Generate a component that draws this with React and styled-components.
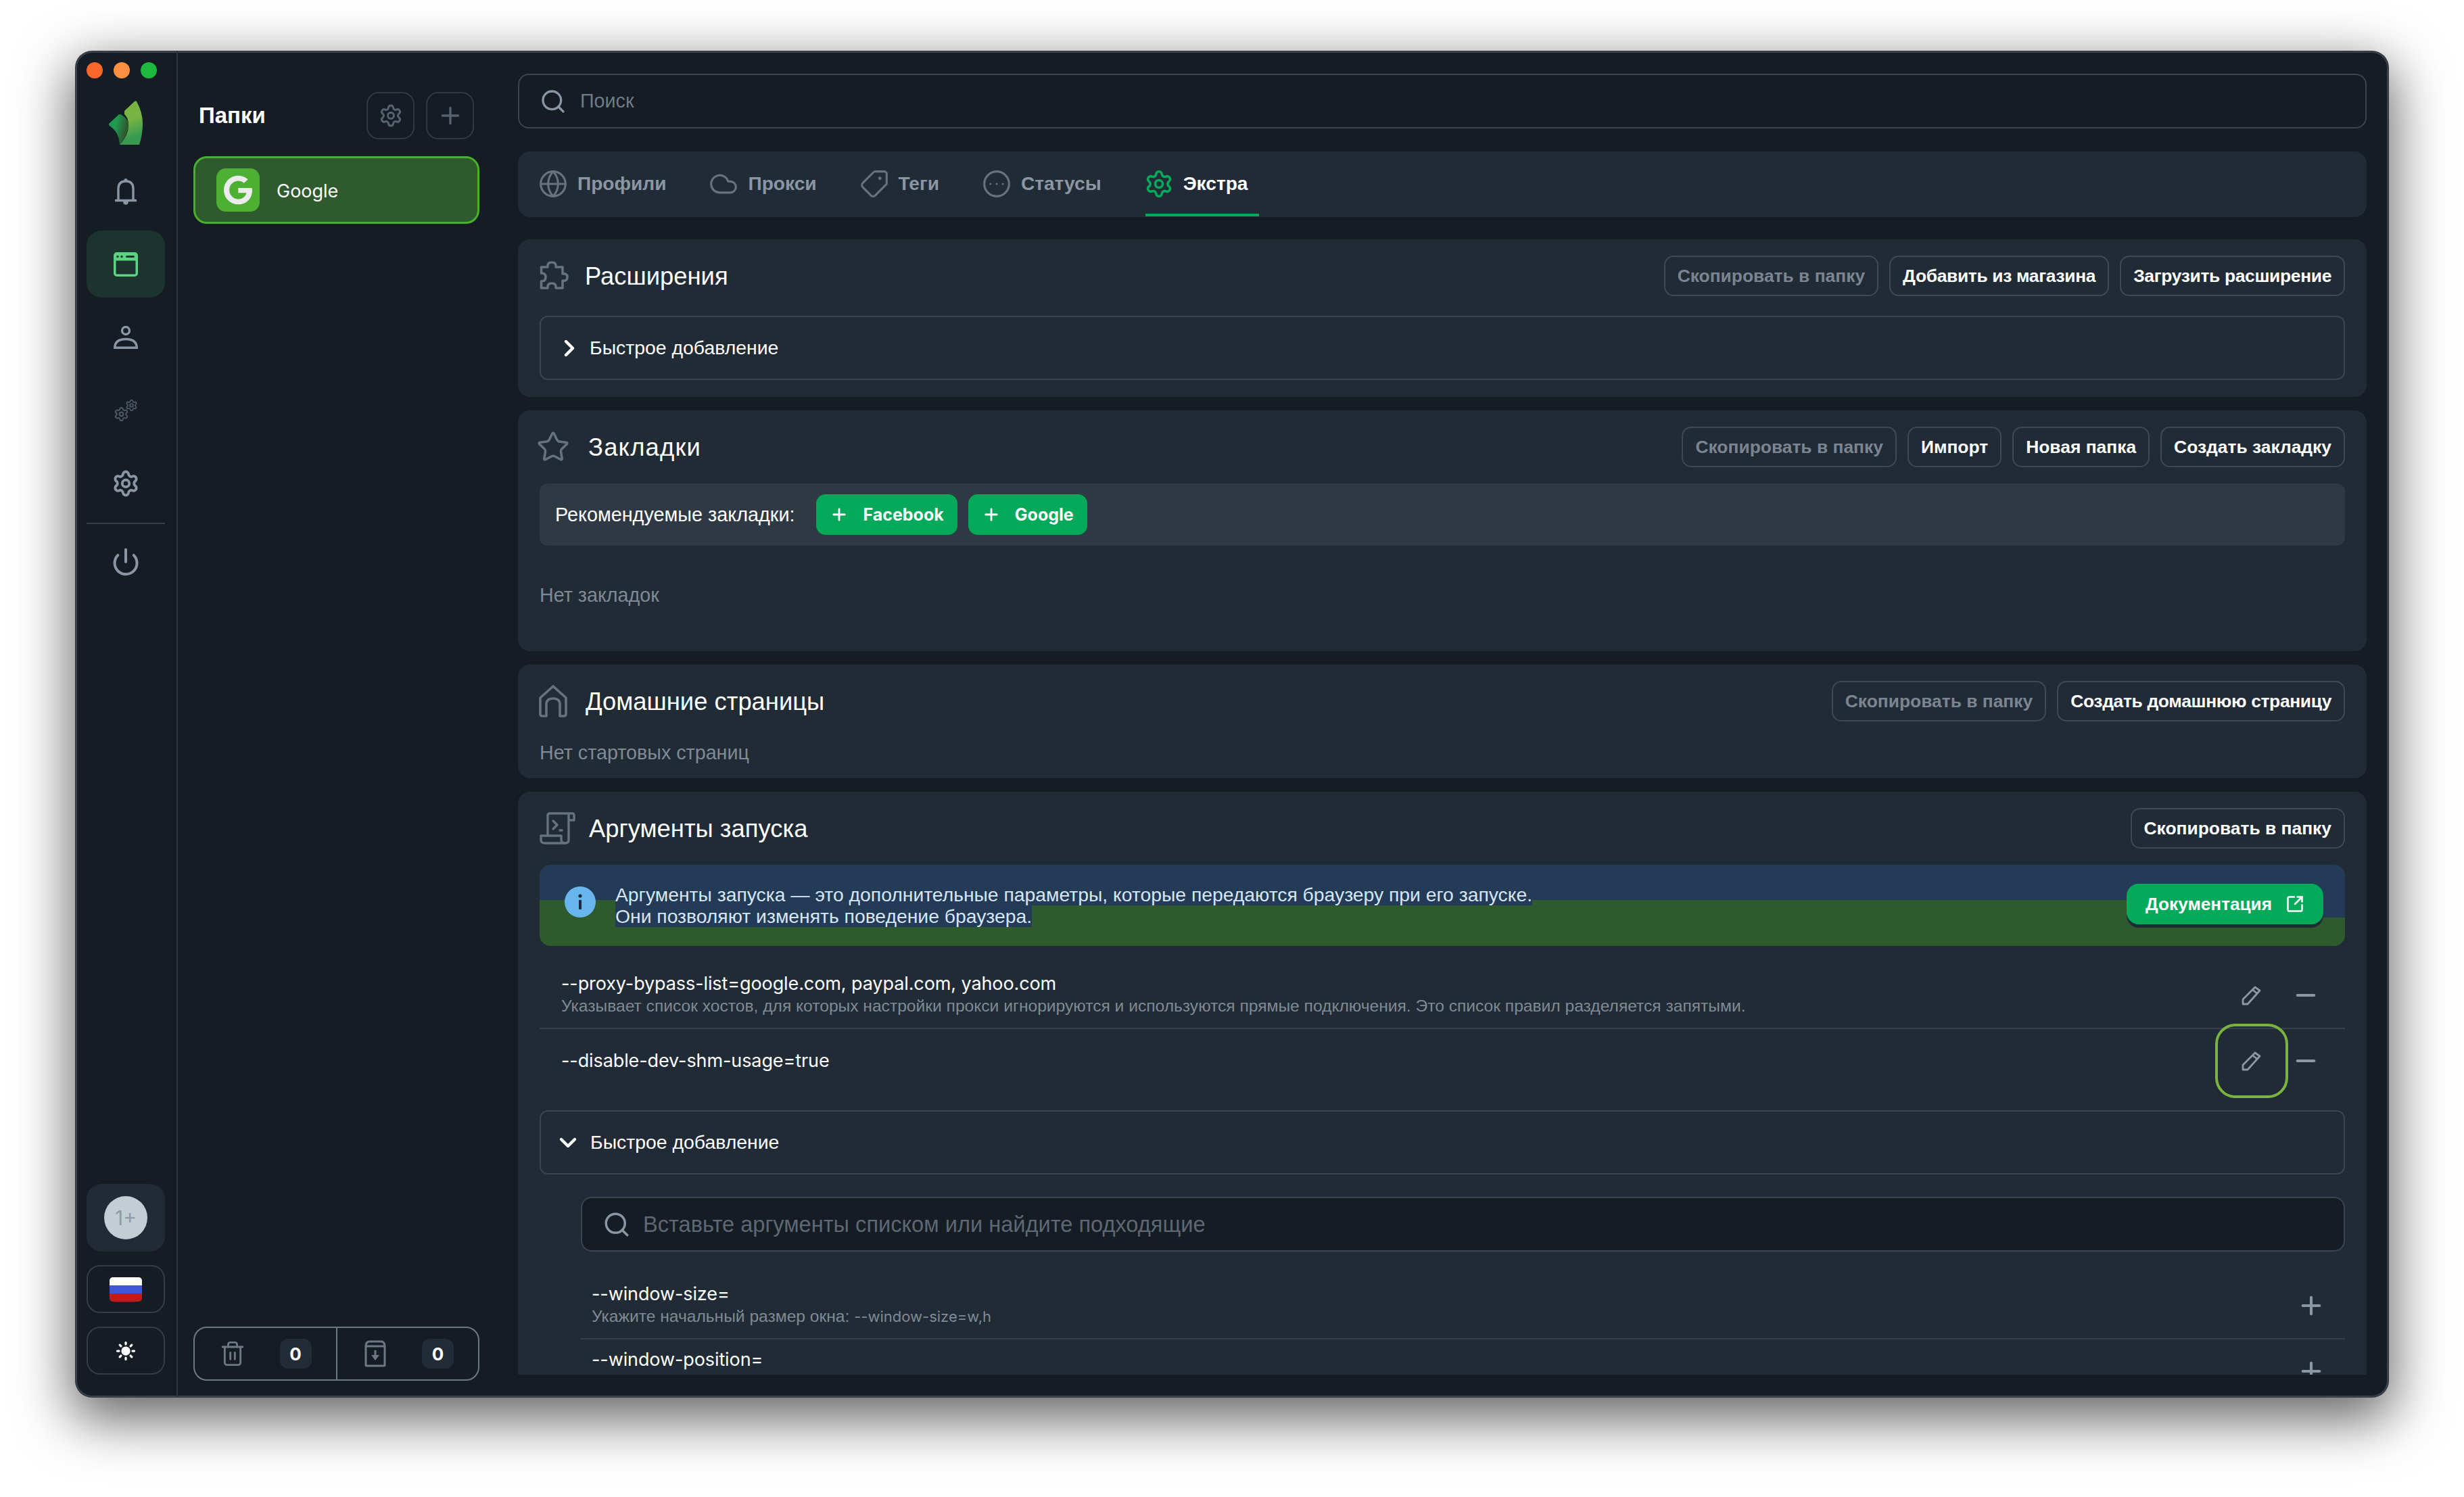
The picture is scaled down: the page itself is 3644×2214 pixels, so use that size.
import React from "react"
import styled, { createGlobalStyle } from "styled-components"
import {
  Settings, Power, Sun, Globe, Cloud, Tag, CircleEllipsis, Star,
  Search, ChevronRight, ChevronDown, Plus, Minus, Trash2, SquareArrowOutUpRight,
} from "lucide-react"
import { FaGoogle } from "react-icons/fa"

const Global = createGlobalStyle`
  html, body { margin: 0; padding: 0; background: #fff; overflow: hidden; }
  * { box-sizing: border-box; }
  body { font-family: "Liberation Sans", Arial, sans-serif; }
`

const Page = styled.div`
  width: 3644px;
  height: 2214px;
  padding: 76px 112px 148px;
`
const Window = styled.div`
  height: 100%;
  display: flex;
  overflow: hidden;
  border-radius: 24px;
  background: #151c24;
  box-shadow: 0 0 0 1px #30363e, inset 0 0 0 2px #3a424c, 0 26px 80px 8px rgba(0, 0, 0, 0.6);
`

/* left rail */
const Rail = styled.aside`
  width: 151px;
  flex-shrink: 0;
  display: flex;
  flex-direction: column;
  padding: 16px 17px 33px 16px;
  border-right: 2px solid #2b343e;
`
const Lights = styled.div`
  display: flex;
  gap: 16px;
`
const Light = styled.span`
  width: 24px;
  height: 24px;
  border-radius: 50%;
  background: ${(p) => p.$color};
`
const LogoWrap = styled.div`
  display: flex;
  justify-content: center;
  margin: 33px 0 19px;
  height: 65px;
`
const RailNav = styled.nav`
  display: flex;
  flex-direction: column;
  gap: 9px;
`
const RailItem = styled.div`
  height: 99px;
  display: flex;
  align-items: center;
  justify-content: center;
  border-radius: 22px;
  color: ${(p) => (p.$dim ? "#4c5763" : "#8a96a3")};
  background: ${(p) => (p.$active ? "#1b342e" : "transparent")};
`
const RailLine = styled.div`
  height: 2px;
  background: #333d48;
  margin-bottom: -3px;
`
const RailBottom = styled.div`
  margin-top: auto;
  display: flex;
  flex-direction: column;
  gap: 20px;
`
const AvatarBox = styled.div`
  height: 100px;
  border-radius: 22px;
  background: #212b36;
  display: flex;
  align-items: center;
  justify-content: center;
`
const Avatar = styled.div`
  width: 64px;
  height: 64px;
  border-radius: 50%;
  background: #c3cdd4;
  color: #8f9ca8;
  font: 400 30px "Inter", sans-serif;
  display: flex;
  align-items: center;
  justify-content: center;
`
const RailBox = styled.div`
  height: 71px;
  border: 2px solid #333d48;
  border-radius: 20px;
  display: flex;
  align-items: center;
  justify-content: center;
  color: #fff;
`
const Flag = styled.div`
  width: 48px;
  height: 36px;
  border-radius: 5px;
  background: linear-gradient(#fff 0 33%, #3f56d8 33% 66%, #c01c1c 66%);
`

/* folders */
const Folders = styled.section`
  width: 503px;
  flex-shrink: 0;
  display: flex;
  flex-direction: column;
  padding: 60px 57px 24px 23px;
`
const FolderHead = styled.div`
  display: flex;
  align-items: center;
  gap: 17px;
  padding: 0 8px;
`
const FolderTitle = styled.h2`
  flex: 1;
  margin: 0;
  color: #fff;
  font-size: 33px;
  font-weight: 700;
`
const SquareBtn = styled.div`
  width: 71px;
  height: 70px;
  border: 2px solid #2f3944;
  border-radius: 18px;
  display: flex;
  align-items: center;
  justify-content: center;
  color: #56626f;
`
const FolderItem = styled.div`
  height: 100px;
  margin-top: 25px;
  padding: 2px 0 0 31px;
  display: flex;
  align-items: center;
  gap: 25px;
  border: 3px solid #46b12c;
  border-radius: 20px;
  background: #2f5a2d;
  color: #fff;
  font: 400 27px "Inter", sans-serif;
`
const FolderIcon = styled.div`
  width: 64px;
  height: 64px;
  margin-top: -2px;
  border-radius: 14px;
  background: #4cb133;
  color: #ececec;
  display: flex;
  align-items: center;
  justify-content: center;
`
const Counters = styled.div`
  margin-top: auto;
  height: 80px;
  display: flex;
  border: 2px solid #6d7885;
  border-radius: 20px;
`
const Counter = styled.div`
  flex: 1;
  display: flex;
  align-items: center;
  justify-content: space-between;
  padding: 0 36px;
  color: #6d7885;
  & + & { border-left: 2px solid #6d7885; }
`
const CountBadge = styled.span`
  width: 47px;
  height: 44px;
  border-radius: 12px;
  background: #222c36;
  color: #fff;
  font: 700 26px "Inter", sans-serif;
  display: flex;
  align-items: center;
  justify-content: center;
`

/* main column */
const Main = styled.main`
  flex: 1;
  min-width: 0;
  display: flex;
  flex-direction: column;
  padding: 33px 32px 33px 0;
`
const SearchBar = styled.div`
  height: 81px;
  flex-shrink: 0;
  display: flex;
  align-items: center;
  gap: ${(p) => (p.$inner ? "18px" : "20px")};
  margin-left: ${(p) => (p.$inner ? "61px" : "0")};
  padding-left: 30px;
  border: 2px solid #3a4551;
  border-radius: 16px;
  background: #151c24;
  font-size: ${(p) => (p.$inner ? "32.6px" : "28.7px")};
  color: ${(p) => (p.$inner ? "#5d6874" : "#6f7b87")};
  svg { color: #8a96a3; flex-shrink: 0; }
`
const Tabs = styled.div`
  height: 97px;
  flex-shrink: 0;
  margin-top: 34px;
  padding-left: 32px;
  display: flex;
  gap: 48px;
  border-radius: 18px;
  background: #212b36;
`
const Tab = styled.div`
  height: 96px;
  padding: 3px 17px 0 0;
  display: flex;
  align-items: center;
  gap: 14px;
  font-size: 28.1px;
  font-weight: 700;
  color: ${(p) => (p.$active ? "#fff" : "#8a96a3")};
  border-bottom: 4px solid ${(p) => (p.$active ? "#04a95a" : "transparent")};
  svg { margin-left: -2px; color: ${(p) => (p.$active ? "#04a95a" : "#66727f")}; }
`
const Scroller = styled.div`
  flex: 1;
  min-height: 0;
  margin-top: 33px;
  overflow: hidden;
  display: flex;
  flex-direction: column;
  gap: 20px;
`
const Panel = styled.section`
  flex-shrink: 0;
  padding: 24px 32px ${(p) => p.$bottom || "0"};
  border-radius: 18px;
  background: #212b36;
`
const PanelHead = styled.header`
  display: flex;
  align-items: center;
  height: 60px;
  margin-bottom: ${(p) => p.$after || "25px"};
  color: #66727f;
`
const PanelTitle = styled.h3`
  flex: 1;
  margin: 0 0 0 ${(p) => p.$gap};
  padding-top: 2px;
  color: #fff;
  font-size: 36.4px;
  line-height: 58px;
  font-weight: 400;
  letter-spacing: ${(p) => p.$track || "0"};
`
const TitleIcon = styled.span`
  display: flex;
  margin-left: -5px;
`
const BtnRow = styled.div`
  display: flex;
  gap: 16px;
`
const GhostBtn = styled.button`
  height: 60px;
  padding: 0 18px;
  border: 2px solid #3d4955;
  border-radius: 14px;
  background: transparent;
  font-family: "Liberation Sans", sans-serif;
  font-size: 26.4px;
  font-weight: 700;
  letter-spacing: ${(p) => (p.$tight ? "-0.33px" : "0")};
  color: ${(p) => (p.$muted ? "#7a8591" : "#fff")};
`
const Accordion = styled.div`
  height: 95px;
  padding-left: ${(p) => (p.$open ? "20px" : "22px")};
  display: flex;
  align-items: center;
  gap: ${(p) => (p.$open ? "13px" : "10px")};
  border: 2px solid #3a4551;
  border-radius: 12px;
  color: #fff;
  font-size: 28.4px;
`
const RecBar = styled.div`
  height: 92px;
  padding-left: 23px;
  display: flex;
  align-items: center;
  border-radius: 12px;
  background: #2e3944;
  color: #fff;
  font-size: 28.8px;
`
const RecLabel = styled.span`
  margin-right: 32px;
`
const GreenBtn = styled.button`
  height: 60px;
  padding: 0 20px;
  margin-right: 16px;
  display: flex;
  align-items: center;
  gap: 21px;
  border: 0;
  border-radius: 14px;
  background: #04a95a;
  color: #fff;
  font: 700 25px "Inter", sans-serif;
`
const Empty = styled.p`
  margin: ${(p) => p.$top} 0 ${(p) => p.$bottom};
  color: #7f8a95;
  font-size: 28.7px;
  line-height: 32px;
`
const Notice = styled.div`
  height: 120px;
  padding: 0 32px 0 37px;
  display: flex;
  align-items: center;
  border-radius: 16px;
  background:
    linear-gradient(#233b57, #233b57) right top / 32px 78px no-repeat,
    linear-gradient(#233b57 52px, #2f5a2d 52px);
`
const NoticeIcon = styled.span`
  display: flex;
  margin: -10px 29px 0 0;
`
const NoticeText = styled.div`
  flex: 1;
  font-size: 28.3px;
  line-height: 32px;
  color: #d7e6f5;
  span { background: #233b57; }
`
const DocBtn = styled.button`
  height: 60px;
  margin-top: -4px;
  padding: 0 28px;
  display: flex;
  align-items: center;
  gap: 20px;
  border: 0;
  border-radius: 18px;
  background: #04a95a;
  box-shadow: 0 5px 0 #1d2a38;
  color: #fff;
  font-family: "Liberation Sans", sans-serif;
  font-size: 26.2px;
  font-weight: 700;
`
const ArgRow = styled.div`
  display: flex;
  align-items: center;
  padding: ${(p) => p.$pad};
  border-bottom: ${(p) => (p.$line ? "2px solid #36414c" : "0")};
  margin-left: ${(p) => p.$indent || "0"};
`
const ArgText = styled.div`
  flex: 1;
  min-width: 0;
  min-height: ${(p) => (p.$tall ? "66px" : "0")};
`
const ArgName = styled.div`
  color: #fff;
  font: 400 27px/32px "Inter", sans-serif;
  letter-spacing: -0.1px;
`
const ArgHint = styled.div`
  margin-top: 1px;
  color: #7f8a95;
  font-size: 24.6px;
  line-height: 32px;
  code { font: 400 22px "Inter", sans-serif; }
`
const Actions = styled.div`
  height: 0;
  display: flex;
  align-items: center;
  flex-shrink: 0;
  color: #8b97a3;
`
const EditBtn = styled.div`
  width: 108px;
  height: 110px;
  flex-shrink: 0;
  display: flex;
  align-items: center;
  justify-content: center;
  border-radius: 30px;
  border: 4px solid ${(p) => (p.$focus ? "#79b53e" : "transparent")};
`
const IconSlot = styled.div`
  width: 52px;
  display: flex;
  justify-content: center;
`
const SubList = styled.div`
  margin-top: 33px;
`

const Logo = () => (
  <svg width="50" height="65" viewBox="0 0 50 65">
    <defs>
      <linearGradient id="lg1" x1="0.4" y1="0" x2="0.6" y2="1">
        <stop offset="0.42" stopColor="#76b543" />
        <stop offset="0.85" stopColor="#389a52" />
      </linearGradient>
      <linearGradient id="lg2" x1="0" y1="0.2" x2="1" y2="0.6">
        <stop offset="0.35" stopColor="#1f9a4e" />
        <stop offset="0.85" stopColor="#2e5a30" />
      </linearGradient>
    </defs>
    <path d="M23 15 L38 1 Q40 -0.5 41 1 Q50 17 50 34 Q50 50 45 65 L16 65 Q30 50 29 34 Q28 24 23 20Z" fill="url(#lg1)" />
    <path d="M0 34 L14 21 Q16 19 19 21 Q27 26 29 34 Q29 50 16 65 Q15 46 1 37 Q-0.5 35 0 34Z" fill="url(#lg2)" />
  </svg>
)
const BellIcon = () => (
  <svg width="32" height="40" viewBox="0 0 32 40" fill="none" stroke="#8a96a3" strokeWidth="3.4">
    <path d="M5 32 V16 Q5 5 16 5 Q27 5 27 16 V32" />
    <path d="M1 33.5 H31" strokeLinecap="round" />
    <circle cx="16" cy="3.5" r="2.6" fill="#8a96a3" stroke="none" />
    <circle cx="16" cy="36" r="3.8" fill="#8a96a3" stroke="none" />
  </svg>
)
const WindowIcon = () => (
  <svg width="36" height="36" viewBox="0 0 36 36">
    <rect x="1.75" y="1.75" width="32.5" height="32.5" rx="3" fill="none" stroke="#5cd484" strokeWidth="3.5" />
    <rect x="2" y="2" width="32" height="10.5" fill="#5cd484" />
    <circle cx="6" cy="6.5" r="1.7" fill="#1b342e" />
    <circle cx="12" cy="6.5" r="1.7" fill="#1b342e" />
    <rect x="18" y="5" width="13" height="3" rx="1.5" fill="#1b342e" />
  </svg>
)
const UserIcon = () => (
  <svg width="36" height="34" viewBox="0 0 36 34" fill="none" stroke="#8a96a3" strokeWidth="3.4">
    <circle cx="18" cy="7" r="5.5" />
    <path d="M1.7 32.3 C2 22 10 19.5 18 19.5 C26 19.5 34 22 34.3 32.3Z" />
  </svg>
)
const Gears = () => (
  <svg width="36" height="34" viewBox="0 0 36 34">
    <Settings x="0" y="11" size={23} strokeWidth={2.2} />
    <Settings x="17" y="0" size={19} strokeWidth={2.4} />
  </svg>
)
const ArchiveIcon = () => (
  <svg width="40" height="40" viewBox="-4 0 40 40" fill="none" stroke="currentColor" strokeWidth="3">
    <path d="M2 9 Q2 2 8 2 H24 Q30 2 30 9 V37 Q30 38 29 38 H3 Q2 38 2 37Z" />
    <path d="M2 9 H30" />
    <path d="M16 15v9" />
    <path d="M10 22 H22 L16 30Z" fill="currentColor" stroke="none" />
  </svg>
)
const PuzzleIcon = () => (
  <svg width="50" height="50" viewBox="0 0 50 50" fill="none" stroke="currentColor" strokeWidth="3.6" strokeLinejoin="round">
    <path d="M7.5 12 H17 Q16 5 23 5 Q30 5 29 12 H39 V22 Q46 21 46 27 Q46 33 39 32 V43 H29 Q30 36 23 36 Q16 36 17 43 H7.5 V33 Q14 33 14 27 Q14 21 7.5 21Z" />
  </svg>
)
const HomeIcon = () => (
  <svg width="50" height="50" viewBox="0 0 50 50" fill="none" stroke="currentColor" strokeWidth="3.6" strokeLinejoin="round">
    <path d="M6 20 L25 3 L44 20 V44 Q44 47 41 47 H35 V30 Q35 21 25 21 Q15 21 15 30 V47 H9 Q6 47 6 44Z" />
  </svg>
)
const ScrollIcon = () => (
  <svg width="54" height="50" viewBox="0 0 54 50" fill="none" stroke="currentColor" strokeWidth="3.4" strokeLinejoin="round" style={{ marginLeft: 5 }}>
    <path d="M12 36 V6 Q12 3 15 3 H48 Q51 3 51 6 V13 H43" />
    <path d="M43 3 V42 Q43 47 38 47 H8 Q2 47 2 42 V36 H32 V42 Q32 47 38 47" />
    <path d="M20 14 L26 20 L20 26 M30 28h3" strokeLinecap="round" />
  </svg>
)
const PenIcon = () => (
  <svg width="30" height="30" viewBox="0 0 30 30" fill="none" stroke="#8b97a3" strokeWidth="2.8" strokeLinejoin="round">
    <path d="M2 28 V21 L20 3 L27 8 L9 28Z" />
    <path d="M16.5 7 L23.5 12.5" />
  </svg>
)
const InfoIcon = () => (
  <svg width="46" height="46" viewBox="0 0 46 46">
    <circle cx="23" cy="23" r="23" fill="#67b7ee" />
    <circle cx="23" cy="14" r="2.6" fill="#1b2b3d" />
    <rect x="21" y="20" width="4" height="14" rx="1" fill="#1b2b3d" />
  </svg>
)

const Arg = ({ name, hint, pad, line, indent, focus, add, tall }) => (
  <ArgRow $pad={pad} $line={line} $indent={indent}>
    <ArgText $tall={tall}>
      <ArgName>{name}</ArgName>
      {hint && <ArgHint>{hint}</ArgHint>}
    </ArgText>
    <Actions>
      {add ? (
        <Plus size={42} strokeWidth={2.4} />
      ) : (
        <>
          <EditBtn $focus={focus}><PenIcon /></EditBtn>
          <IconSlot><Minus size={42} strokeWidth={2.4} /></IconSlot>
        </>
      )}
    </Actions>
  </ArgRow>
)

export default function App() {
  return (
    <Page>
      <Global />
      <Window>
        <Rail>
          <Lights>
            <Light $color="#f8672c" />
            <Light $color="#ff9040" />
            <Light $color="#1fb83e" />
          </Lights>
          <LogoWrap><Logo /></LogoWrap>
          <RailNav>
            <RailItem><BellIcon /></RailItem>
            <RailItem $active><WindowIcon /></RailItem>
            <RailItem><UserIcon /></RailItem>
            <RailItem $dim><Gears /></RailItem>
            <RailItem><Settings size={42} strokeWidth={2.2} /></RailItem>
            <RailLine />
            <RailItem><Power size={44} strokeWidth={2.2} /></RailItem>
          </RailNav>
          <RailBottom>
            <AvatarBox><Avatar>1+</Avatar></AvatarBox>
            <RailBox><Flag /></RailBox>
            <RailBox><Sun size={30} strokeWidth={2.6} fill="#fff" /></RailBox>
          </RailBottom>
        </Rail>

        <Folders>
          <FolderHead>
            <FolderTitle>Папки</FolderTitle>
            <SquareBtn><Settings size={36} strokeWidth={2} /></SquareBtn>
            <SquareBtn><Plus size={40} strokeWidth={2} /></SquareBtn>
          </FolderHead>
          <FolderItem>
            <FolderIcon><FaGoogle size={44} /></FolderIcon>
            Google
          </FolderItem>
          <Counters>
            <Counter><Trash2 size={40} strokeWidth={1.7} /><CountBadge>0</CountBadge></Counter>
            <Counter><ArchiveIcon /><CountBadge>0</CountBadge></Counter>
          </Counters>
        </Folders>

        <Main>
          <SearchBar>
            <Search size={40} strokeWidth={2} />
            Поиск
          </SearchBar>
          <Tabs>
            <Tab><Globe size={44} strokeWidth={1.7} />Профили</Tab>
            <Tab><Cloud size={44} strokeWidth={1.7} />Прокси</Tab>
            <Tab><Tag size={44} strokeWidth={1.7} style={{ transform: "rotate(90deg)" }} />Теги</Tab>
            <Tab><CircleEllipsis size={44} strokeWidth={1.7} />Статусы</Tab>
            <Tab $active><Settings size={44} strokeWidth={2} />Экстра</Tab>
          </Tabs>

          <Scroller>
            <Panel $bottom="25px">
              <PanelHead $after="29px">
                <TitleIcon><PuzzleIcon /></TitleIcon>
                <PanelTitle $gap="22px">Расширения</PanelTitle>
                <BtnRow>
                  <GhostBtn $muted>Скопировать в папку</GhostBtn>
                  <GhostBtn $tight>Добавить из магазина</GhostBtn>
                  <GhostBtn $tight>Загрузить расширение</GhostBtn>
                </BtnRow>
              </PanelHead>
              <Accordion><ChevronRight size={40} strokeWidth={2.6} />Быстрое добавление</Accordion>
            </Panel>

            <Panel>
              <PanelHead $after="24px">
                <TitleIcon><Star size={50} strokeWidth={1.7} /></TitleIcon>
                <PanelTitle $gap="27px" $track="1.2px">Закладки</PanelTitle>
                <BtnRow>
                  <GhostBtn $muted>Скопировать в папку</GhostBtn>
                  <GhostBtn>Импорт</GhostBtn>
                  <GhostBtn>Новая папка</GhostBtn>
                  <GhostBtn>Создать закладку</GhostBtn>
                </BtnRow>
              </PanelHead>
              <RecBar>
                <RecLabel>Рекомендуемые закладки:</RecLabel>
                <GreenBtn><Plus size={28} strokeWidth={2.4} />Facebook</GreenBtn>
                <GreenBtn><Plus size={28} strokeWidth={2.4} />Google</GreenBtn>
              </RecBar>
              <Empty $top="57px" $bottom="67px">Нет закладок</Empty>
            </Panel>

            <Panel>
              <PanelHead $after="30px">
                <TitleIcon><HomeIcon /></TitleIcon>
                <PanelTitle $gap="23px">Домашние страницы</PanelTitle>
                <BtnRow>
                  <GhostBtn $muted>Скопировать в папку</GhostBtn>
                  <GhostBtn $tight>Создать домашнюю страницу</GhostBtn>
                </BtnRow>
              </PanelHead>
              <Empty $top="0" $bottom="22px">Нет стартовых страниц</Empty>
            </Panel>

            <Panel>
              <PanelHead $after="24px">
                <TitleIcon><ScrollIcon /></TitleIcon>
                <PanelTitle $gap="19px">Аргументы запуска</PanelTitle>
                <GhostBtn>Скопировать в папку</GhostBtn>
              </PanelHead>
              <Notice>
                <NoticeIcon><InfoIcon /></NoticeIcon>
                <NoticeText>
                  <span>Аргументы запуска — это дополнительные параметры, которые передаются браузеру при его запуске.</span>
                  <br />
                  <span>Они позволяют изменять поведение браузера.</span>
                </NoticeText>
                <DocBtn>Документация<SquareArrowOutUpRight size={28} strokeWidth={2.2} /></DocBtn>
              </Notice>
              <Arg
                name="--proxy-bypass-list=google.com, paypal.com, yahoo.com"
                hint="Указывает список хостов, для которых настройки прокси игнорируются и используются прямые подключения. Это список правил разделяется запятыми."
                pad="40px 32px 16px"
                line
              />
              <Arg name="--disable-dev-shm-usage=true" pad="31px 32px 57px" focus />
              <Accordion $open><ChevronDown size={40} strokeWidth={2.6} />Быстрое добавление</Accordion>
              <SubList>
                <SearchBar $inner>
                  <Search size={42} strokeWidth={2} />
                  Вставьте аргументы списком или найдите подходящие
                </SearchBar>
                <Arg
                  name="--window-size="
                  hint={<>Укажите начальный размер окна: <code>--window-size=w,h</code></>}
                  pad="47px 29px 16px 16px"
                  indent="61px"
                  line
                  add
                />
                <Arg name="--window-position=" pad="14px 29px 14px 16px" indent="61px" add tall />
              </SubList>
            </Panel>
          </Scroller>
        </Main>
      </Window>
    </Page>
  )
}
